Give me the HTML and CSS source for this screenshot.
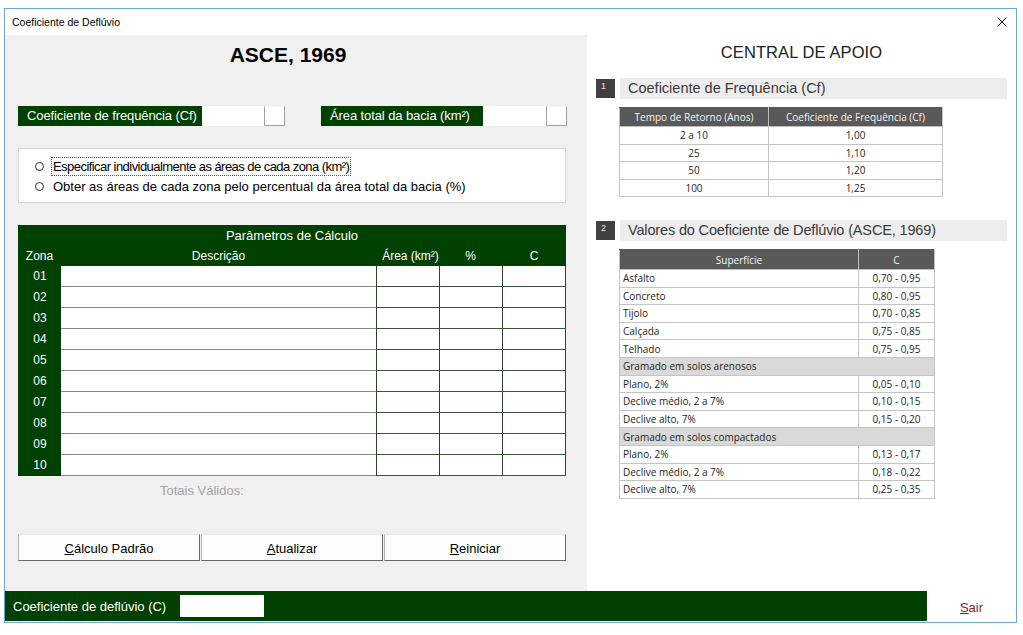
FILE: index.html
```html
<!DOCTYPE html>
<html lang="pt">
<head>
<meta charset="utf-8">
<title>Coeficiente de Deflúvio</title>
<link rel="stylesheet" href="styles.css">
</head>
<body>
<div class="window">
  <div class="titlebar">
    <span class="title">Coeficiente de Deflúvio</span>
    <svg class="close" width="10" height="10" viewBox="0 0 10 10"><path d="M0.5 0.5L9.5 9.5M9.5 0.5L0.5 9.5" stroke="#111" stroke-width="1" fill="none"/></svg>
  </div>
  <div class="main">
    <div class="left">
      <h1 class="heading">ASCE, 1969</h1>
      <div class="fields">
        <div class="field field-cf">
          <span class="field-label">Coeficiente de frequência (Cf)</span>
          <span class="field-input"></span>
          <span class="field-btn"></span>
        </div>
        <div class="field field-area">
          <span class="field-label">Área total da bacia (km²)</span>
          <span class="field-input"></span>
          <span class="field-btn"></span>
        </div>
      </div>
      <div class="options">
        <div class="option"><span class="radio"></span><span class="option-text focus">Especificar individualmente as áreas de cada zona (km²)</span></div>
        <div class="option"><span class="radio"></span><span class="option-text">Obter as áreas de cada zona pelo percentual da área total da bacia (%)</span></div>
      </div>
      <div class="params">
        <div class="params-title">Parâmetros de Cálculo</div>
        <div class="ph">Zona</div><div class="ph">Descrição</div><div class="ph ph-area">Área (km²)</div><div class="ph">%</div><div class="ph">C</div>
        <div class="zn">01</div><div class="cell desc"></div><div class="cell num"></div><div class="cell num"></div><div class="cell num last"></div>
        <div class="zn">02</div><div class="cell desc"></div><div class="cell num"></div><div class="cell num"></div><div class="cell num last"></div>
        <div class="zn">03</div><div class="cell desc"></div><div class="cell num"></div><div class="cell num"></div><div class="cell num last"></div>
        <div class="zn">04</div><div class="cell desc"></div><div class="cell num"></div><div class="cell num"></div><div class="cell num last"></div>
        <div class="zn">05</div><div class="cell desc"></div><div class="cell num"></div><div class="cell num"></div><div class="cell num last"></div>
        <div class="zn">06</div><div class="cell desc"></div><div class="cell num"></div><div class="cell num"></div><div class="cell num last"></div>
        <div class="zn">07</div><div class="cell desc"></div><div class="cell num"></div><div class="cell num"></div><div class="cell num last"></div>
        <div class="zn">08</div><div class="cell desc"></div><div class="cell num"></div><div class="cell num"></div><div class="cell num last"></div>
        <div class="zn">09</div><div class="cell desc"></div><div class="cell num"></div><div class="cell num"></div><div class="cell num last"></div>
        <div class="zn">10</div><div class="cell desc"></div><div class="cell num"></div><div class="cell num"></div><div class="cell num last"></div>
      </div>
      <div class="totals">Totais Válidos:</div>
      <div class="buttons">
        <button class="btn"><u>C</u>álculo Padrão</button>
        <button class="btn"><u>A</u>tualizar</button>
        <button class="btn"><u>R</u>einiciar</button>
      </div>
    </div>
    <div class="right">
      <div class="support-title">CENTRAL DE APOIO</div>
      <div class="section">
        <span class="section-num">1</span>
        <span class="section-bar">Coeficiente de Frequência (Cf)</span>
      </div>
      <table class="ref ref-cf">
        <thead>
          <tr><th class="c1">Tempo de Retorno (Anos)</th><th>Coeficiente de Frequência (Cf)</th></tr>
        </thead>
        <tbody>
          <tr><td>2 a 10</td><td>1,00</td></tr>
          <tr><td>25</td><td>1,10</td></tr>
          <tr><td>50</td><td>1,20</td></tr>
          <tr><td>100</td><td>1,25</td></tr>
        </tbody>
      </table>
      <div class="section section-2">
        <span class="section-num">2</span>
        <span class="section-bar">Valores do Coeficiente de Deflúvio (ASCE, 1969)</span>
      </div>
      <table class="ref ref-c">
        <thead>
          <tr><th class="c1">Superfície</th><th>C</th></tr>
        </thead>
        <tbody>
          <tr><td class="l">Asfalto</td><td>0,70 - 0,95</td></tr>
          <tr><td class="l">Concreto</td><td>0,80 - 0,95</td></tr>
          <tr><td class="l">Tijolo</td><td>0,70 - 0,85</td></tr>
          <tr><td class="l">Calçada</td><td>0,75 - 0,85</td></tr>
          <tr><td class="l">Telhado</td><td>0,75 - 0,95</td></tr>
          <tr class="group"><td class="l" colspan="2">Gramado em solos arenosos</td></tr>
          <tr><td class="l">Plano, 2%</td><td>0,05 - 0,10</td></tr>
          <tr><td class="l">Declive médio, 2 a 7%</td><td>0,10 - 0,15</td></tr>
          <tr><td class="l">Declive alto, 7%</td><td>0,15 - 0,20</td></tr>
          <tr class="group"><td class="l" colspan="2">Gramado em solos compactados</td></tr>
          <tr><td class="l">Plano, 2%</td><td>0,13 - 0,17</td></tr>
          <tr><td class="l">Declive médio, 2 a 7%</td><td>0,18 - 0,22</td></tr>
          <tr><td class="l">Declive alto, 7%</td><td>0,25 - 0,35</td></tr>
        </tbody>
      </table>
    </div>
  </div>
  <div class="footer">
    <div class="footer-bar">
      <span class="footer-label">Coeficiente de deflúvio (C)</span>
      <span class="footer-input"></span>
    </div>
    <div class="footer-exit"><span class="exit"><u>S</u>air</span></div>
  </div>
</div>
</body>
</html>
```
FILE: styles.css
```css
* { box-sizing: border-box; }
html, body { margin: 0; padding: 0; }
body {
  background: #ffffff;
  width: 1023px;
  height: 635px;
  overflow: hidden;
  font-family: "Liberation Sans", Arial, sans-serif;
  color: #000;
}
.window {
  margin: 8px 0 0 4px;
  width: 1013px;
  height: 615px;
  border: 1px solid #6fa6d8;
  display: flex;
  flex-direction: column;
  background: #fff;
}
.titlebar {
  flex: none;
  height: 26px;
  display: flex;
  align-items: center;
  justify-content: space-between;
  padding: 0 9px 0 7px;
}
.title { font-size: 10.5px; color: #000; }
.close { display: block; }

.main { flex: none; height: 556px; display: flex; }
.left {
  width: 582px;
  flex: none;
  background: #f0f0f0;
  padding-left: 13px;
  display: flex;
  flex-direction: column;
}
.heading {
  margin: 8px 0 0 0;
  width: 540px;
  text-align: center;
  font-size: 21px;
  line-height: 24px;
  font-weight: bold;
}
.fields { margin-top: 39px; display: flex; height: 20px; }
.field { display: flex; height: 20px; }
.field-area { margin-left: 36px; }
.field-label {
  background: #004000;
  color: #fff;
  font-size: 13px;
  line-height: 20px;
  padding-left: 9px;
  white-space: nowrap;
  letter-spacing: -0.1px;
}
.field-cf .field-label { width: 184px; }
.field-area .field-label { width: 162px; }
.field-input { background: #fff; }
.field-cf .field-input { width: 62px; }
.field-area .field-input { width: 63px; }
.field-btn {
  width: 21px;
  background: #fff;
  border-left: 1px solid #a0a0a0;
  border-right: 1px solid #a0a0a0;
  border-bottom: 1px solid #a0a0a0;
  border-top: 1px solid #f4f4f4;
}

.options {
  margin-top: 22px;
  width: 548px;
  height: 55px;
  background: #fff;
  border: 1px solid #d9d9d9;
  padding: 7px 0 0 16px;
}
.option { display: flex; align-items: center; height: 20px; }
.radio {
  width: 9px;
  height: 9px;
  border: 1px solid #333;
  border-radius: 50%;
  margin-right: 7px;
  flex: none;
}
.option-text {
  font-size: 13px;
  line-height: 17px;
  padding: 0 1px;
  border: 1px dotted transparent;
  color: #000;
  white-space: nowrap;
}
.option-text.focus { border-color: #555; letter-spacing: -0.55px; }

.params {
  margin-top: 22px;
  width: 548px;
  background: #004000;
  display: grid;
  grid-template-columns: 43px 315px 63px 63px 64px;
  grid-template-rows: 22px 19px repeat(10, 21px);
  color: #fff;
}
.params-title {
  grid-column: 1 / -1;
  text-align: center;
  font-size: 13px;
  line-height: 22px;
}
.ph { text-align: center; font-size: 12px; line-height: 19px; white-space: nowrap; }
.ph-area { padding-left: 6px; overflow: visible; }
.zn { text-align: center; font-size: 12px; line-height: 21px; padding-left: 1px; }
.cell { background: #fff; }
.cell.desc { border-bottom: 1px solid #8a8a8a; }
.cell.num { border-left: 1px solid #2a452a; border-bottom: 1px solid #3c563c; }
.cell.last { border-right: 1px solid #2a452a; }

.totals {
  margin: 7px 0 0 142px;
  font-size: 13px;
  line-height: 16px;
  color: #a3a3a3;
}
.buttons {
  margin-top: 35px;
  width: 548px;
  display: grid;
  grid-template-columns: 182px 182px 182px;
  column-gap: 1px;
}
.btn {
  height: 27px;
  background: #fdfdfd;
  border-style: solid;
  border-width: 1px;
  border-color: #ececec #6a6a6a #6a6a6a #b4b4b4;
  font-family: "Liberation Sans", Arial, sans-serif;
  font-size: 13px;
  color: #000;
  padding: 2px 0 0 0;
}

.right {
  flex: 1;
  background: #fff;
  padding: 0 9px 0 9px;
}
.support-title {
  margin-top: 7px;
  text-align: center;
  font-size: 16.5px;
  line-height: 20px;
  color: #222;
  letter-spacing: 0.1px;
}
.section { margin-top: 16px; display: flex; align-items: center; height: 21px; }
.section-2 { margin-top: 23px; }
.section-num {
  width: 19px;
  height: 19px;
  background: #404040;
  color: #e8e8e8;
  font-size: 9px;
  line-height: 12px;
  padding: 1px 0 0 5px;
  flex: none;
}
.section-bar {
  margin-left: 5px;
  flex: 1;
  height: 21px;
  background: #ededed;
  padding-left: 8px;
  font-size: 14.5px;
  line-height: 21px;
  color: #3a3a3a;
}
.section-2 .section-bar { letter-spacing: -0.15px; }

.ref {
  margin: 8px 0 0 23px;
  border-collapse: collapse;
  table-layout: fixed;
  font-family: "Open Sans", sans-serif;
  font-size: 10px;
  color: #1e1e1e;
}
.ref th {
  background: #595959;
  color: #f4f4f4;
  font-weight: normal;
  border: 1px solid #bfbfbf;
  border-top-color: #595959;
  padding: 0;
  text-align: center;
}
.ref td {
  border: 1px solid #c4c4c4;
  padding: 0;
  text-align: center;
  line-height: 14px;
}
.ref td.l { text-align: left; padding-left: 3px; }
.ref-cf { width: 324px; }
.ref-cf .c1 { width: 149px; }
.ref-cf th { height: 19px; }
.ref-cf td { height: 17.5px; }
.ref-c { width: 316px; }
.ref-c .c1 { width: 239px; }
.ref-c th { height: 20px; }
.ref-c td { height: 17.6px; }
.ref-c .group td { background: #d9d9d9; }

.footer { flex: none; height: 30px; display: flex; }
.footer-bar {
  width: 922px;
  background: #004000;
  display: flex;
  align-items: center;
  padding-left: 8px;
}
.footer-label { width: 167px; color: #fff; font-size: 13px; }
.footer-input { width: 84px; height: 22px; background: #fff; }
.footer-exit {
  flex: 1;
  display: flex;
  align-items: center;
  justify-content: center;
}
.exit { color: #8a1c2a; font-size: 13px; padding-top: 2px; }
```
